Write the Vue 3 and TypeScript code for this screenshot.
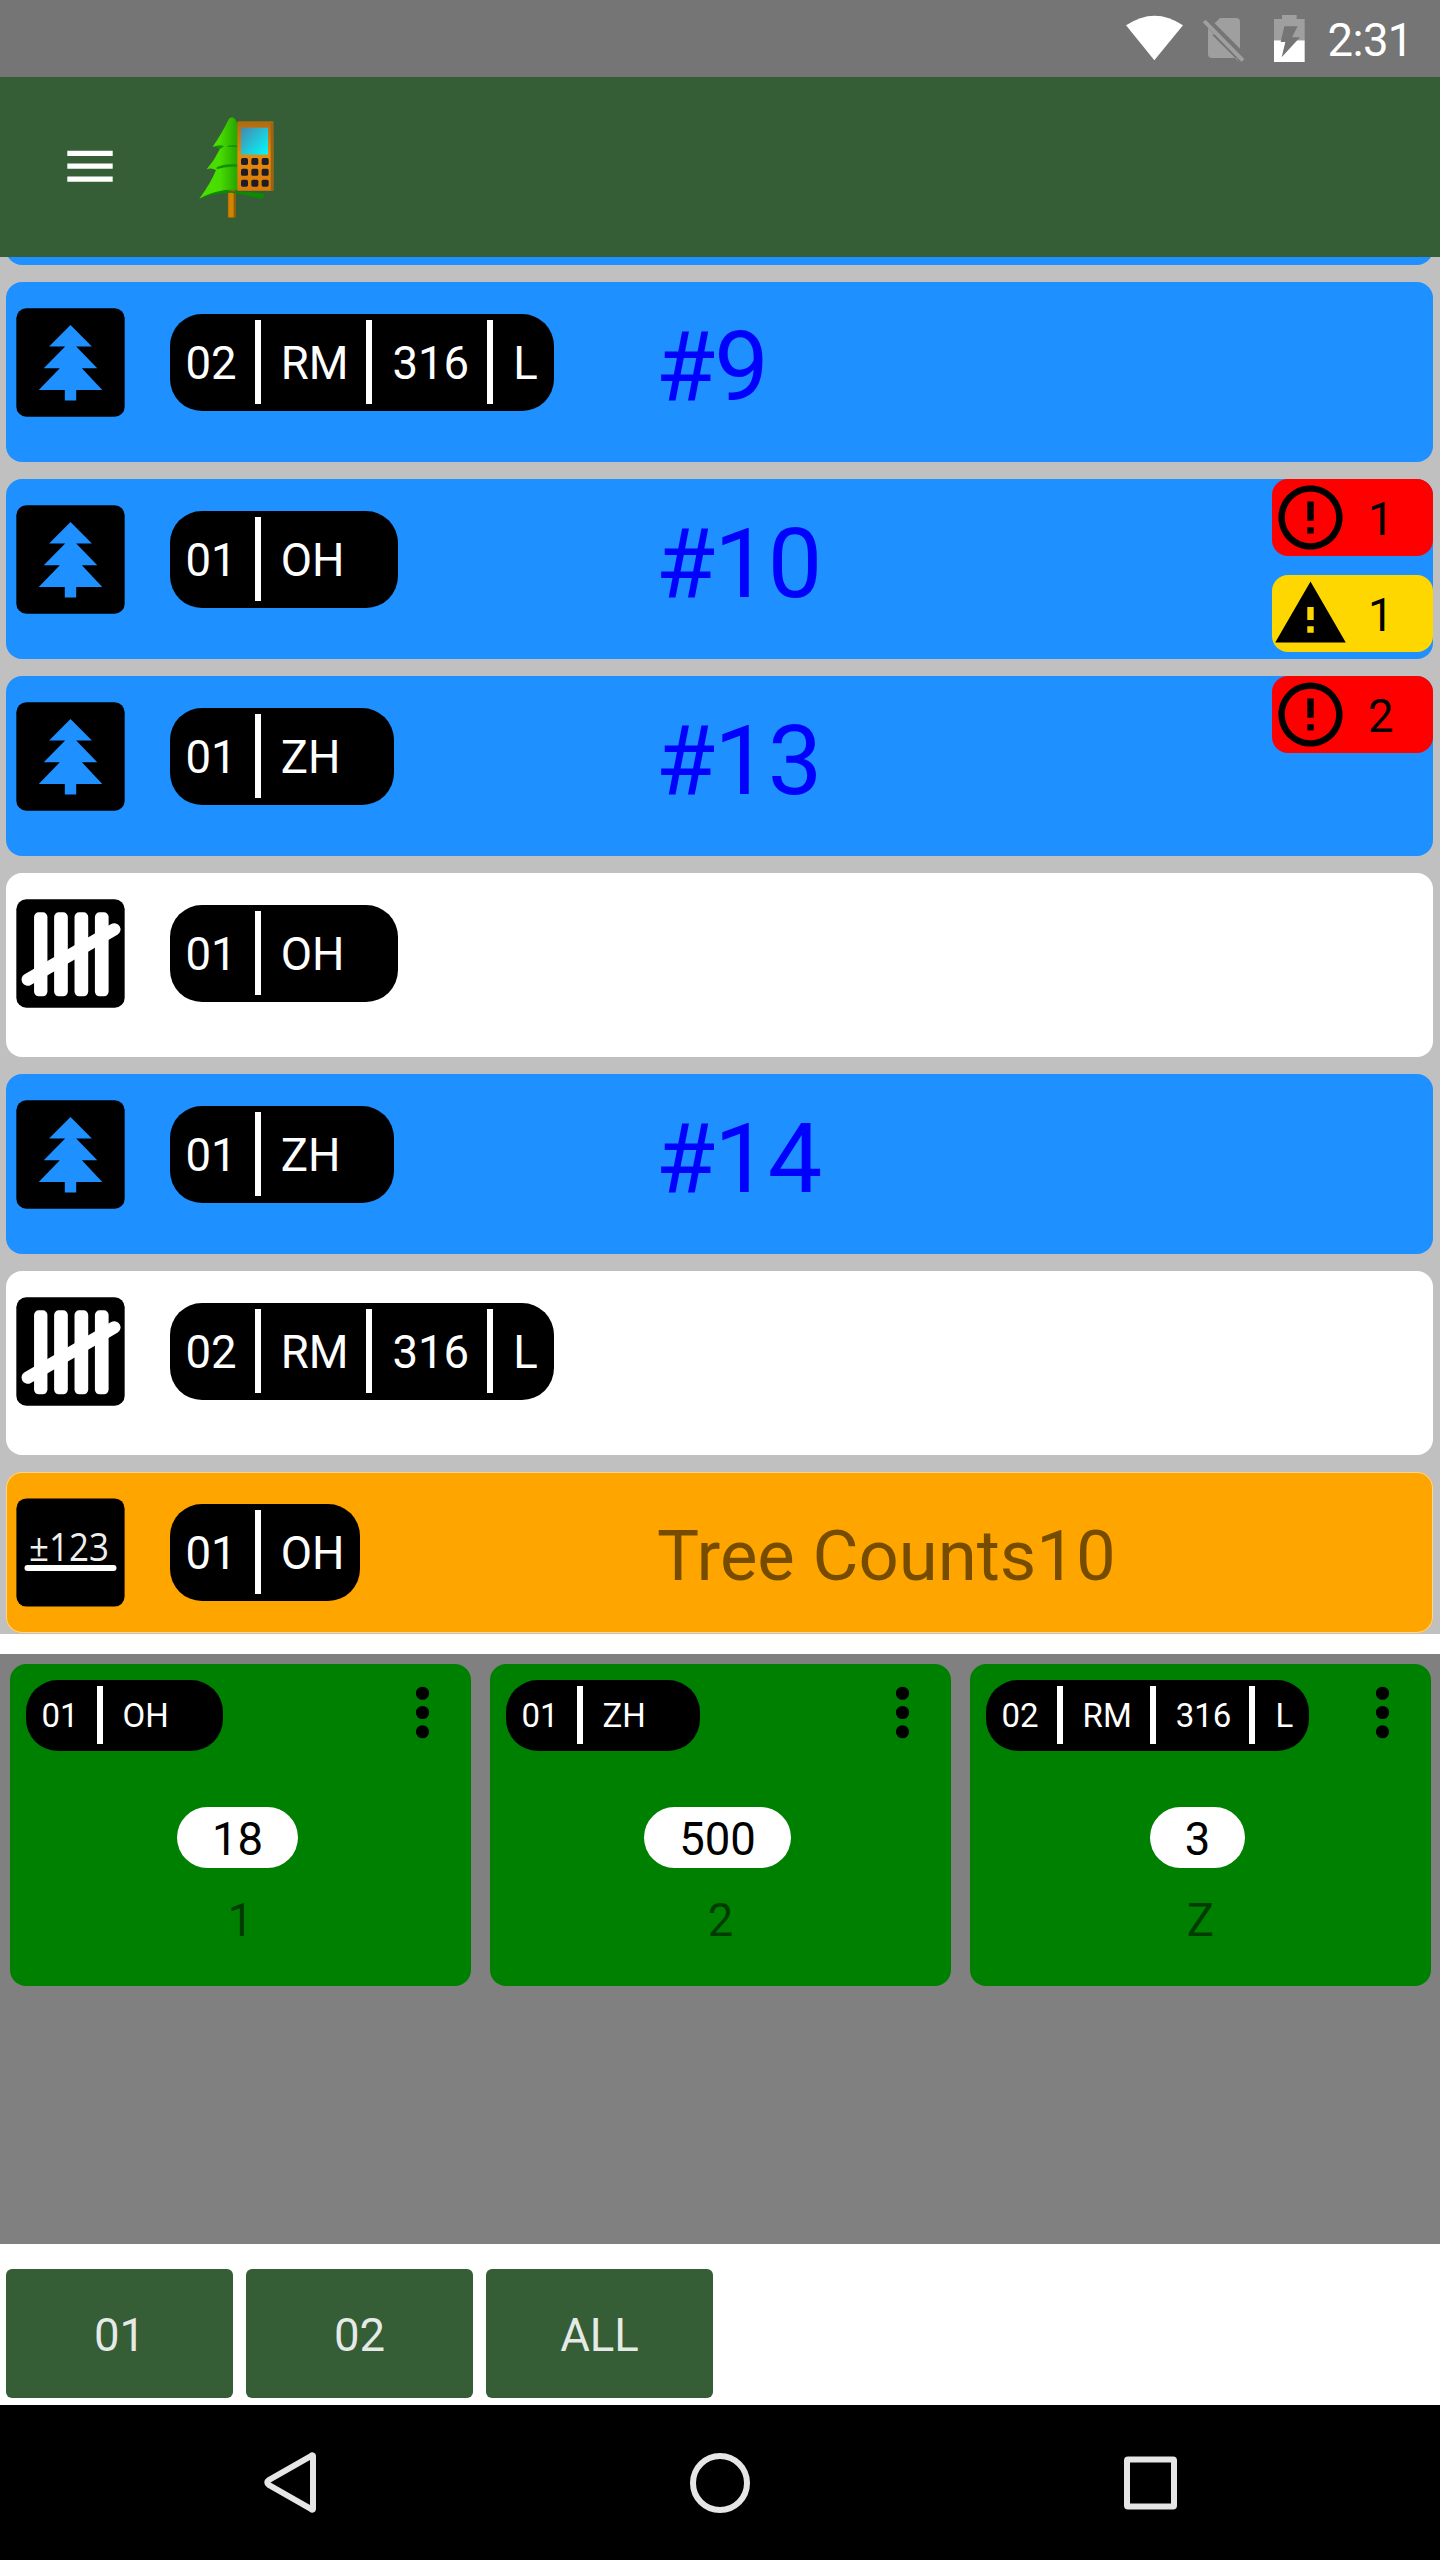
<script setup lang="ts">
type Kind = 'tree' | 'tally' | 'edit'

interface Badge {
  level: 'error' | 'warning'
  count: number
}

interface Entry {
  kind: Kind
  codes: string[]
  tail: boolean
  title: string
  badges: Badge[]
}

interface Tally {
  codes: string[]
  tail: boolean
  count: number
  hotkey: string
}

const entries: Entry[] = [
  { kind: 'tree', codes: ['02', 'RM', '316', 'L'], tail: false, title: '#9', badges: [] },
  {
    kind: 'tree',
    codes: ['01', 'OH'],
    tail: true,
    title: '#10',
    badges: [
      { level: 'error', count: 1 },
      { level: 'warning', count: 1 },
    ],
  },
  { kind: 'tree', codes: ['01', 'ZH'], tail: true, title: '#13', badges: [{ level: 'error', count: 2 }] },
  { kind: 'tally', codes: ['01', 'OH'], tail: true, title: '', badges: [] },
  { kind: 'tree', codes: ['01', 'ZH'], tail: true, title: '#14', badges: [] },
  { kind: 'tally', codes: ['02', 'RM', '316', 'L'], tail: false, title: '', badges: [] },
  { kind: 'edit', codes: ['01', 'OH'], tail: false, title: 'Tree Counts10', badges: [] },
]

const tallies: Tally[] = [
  { codes: ['01', 'OH'], tail: true, count: 18, hotkey: '1' },
  { codes: ['01', 'ZH'], tail: true, count: 500, hotkey: '2' },
  { codes: ['02', 'RM', '316', 'L'], tail: false, count: 3, hotkey: 'Z' },
]

const strata: string[] = ['01', '02', 'ALL']
const keyRows = [0, 1, 2]
</script>

<template>
  <div class="screen">
    <div class="status">
      <svg class="status-icons" viewBox="60 30 570 171">
        <path d="M78 76Q164 18 249 76L163 181Z" fill="#fff" />
        <path d="M324 92L417 185 410 174H336Q324 174 324 162ZM344 70L360 54H408Q420 54 420 66V146Z" fill="#9f9f9f" />
        <path d="M308 67L317 59 433 177 425 186Z" fill="#9f9f9f" />
        <path d="M324 104V84L344 104Z" fill="#9f9f9f" />
        <path d="M522 57H546V45H590V57H614V121H522Z" fill="#9f9f9f" />
        <path d="M522 121H614V186H522Z" fill="#fff" />
        <path d="M553 79H593L576 112H600L545 172 556 126H542Z" fill="#757575" />
      </svg>
      <span class="clock">2:31</span>
    </div>

    <header class="appbar">
      <svg class="menu" viewBox="0 0 46 32">
        <path d="M.3 .8H45.700V6H.3ZM.3 13.600H45.700V18.800H.3ZM.3 26.500H45.700V31.700H.3Z" fill="#fff" />
      </svg>
      <svg class="logo" viewBox="570 150 270 330">
        <defs>
          <linearGradient id="leaf" x1="0" y1="0" x2="1" y2="0">
            <stop offset="0" stop-color="#4be000" />
            <stop offset=".5" stop-color="#48dc00" />
            <stop offset="1" stop-color="#1f9a00" />
          </linearGradient>
          <linearGradient id="glass" x1="0" y1="0" x2="1" y2="1">
            <stop offset="0" stop-color="#4789ad" />
            <stop offset="1" stop-color="#00fbff" />
          </linearGradient>
          <linearGradient id="body" x1="0" y1="0" x2="0" y2="1">
            <stop offset="0" stop-color="#b06a10" />
            <stop offset=".5" stop-color="#e88a0c" />
            <stop offset="1" stop-color="#d97a08" />
          </linearGradient>
        </defs>
        <rect x="683" y="388" width="25" height="85" fill="#8a5c05" />
        <rect x="685" y="392" width="16" height="80" fill="#d08400" />
        <path d="M598 416Q650 382 700 394Q760 395 794 402Q792 416 780 416Q730 402 692 398Q640 400 598 416Z" fill="#0c8a04" />
        <path d="M686 178Q695 166 706 178L722 214V392Q690 386 660 393Q620 402 598 416Q632 370 648 330Q634 322 620 328Q644 300 660 266Q650 258 638 260Q664 224 686 178Z" fill="url(#leaf)" />
        <path d="M642 260Q656 252 672 258L662 266ZM650 322Q670 310 722 312V322Q680 317 650 328ZM682 258Q700 254 722 258V262Q700 260 682 260Z" fill="#159004" />
        <rect x="712" y="184" width="108" height="208" rx="3" fill="url(#body)" />
        <path d="M812 188H820V392H812Z" fill="#9a6414" />
        <rect x="723" y="203" width="81" height="81" fill="url(#glass)" />
        <g fill="#1d1d28">
          <template v-for="r in keyRows" :key="r">
            <rect v-for="c in keyRows" :key="c" :x="723 + c * 31" :y="294 + r * 32.5" width="21" height="21" rx="5" />
          </template>
        </g>
      </svg>
    </header>

    <main class="list">
      <div class="row-edge"></div>
      <article v-for="(e, i) in entries" :key="i" class="row" :class="e.kind">
        <svg v-if="e.kind === 'tree'" class="kind" viewBox="49 720 326 326">
          <rect x="50" y="721" width="324" height="324" rx="30" fill="#000" />
          <path d="M212 771L276 835H229L292 900H246L307 965H229V997H195V965H117L180 900H132L196 835H148Z" fill="#1e90ff" />
        </svg>
        <svg v-else-if="e.kind === 'tally'" class="kind" viewBox="49 117 326 326">
          <rect x="50" y="118" width="324" height="324" rx="30" fill="#000" />
          <g fill="#fff">
            <rect x="103" y="157" width="40" height="251" rx="14" />
            <rect x="163" y="157" width="41" height="251" rx="14" />
            <rect x="224" y="157" width="41" height="251" rx="14" />
            <rect x="285" y="157" width="41" height="251" rx="14" />
          </g>
          <path d="M84 358L343 208" stroke="#fff" stroke-width="37" stroke-linecap="round" />
        </svg>
        <svg v-else class="kind" viewBox="0 0 109 109">
          <rect x=".4" y=".4" width="108.200" height="108.200" rx="10" fill="#000" />
          <text x="13" y="63" textLength="80" lengthAdjust="spacingAndGlyphs" class="kind-text">±123</text>
          <rect x="8.500" y="67" width="92" height="6" rx="3" fill="#fff" />
        </svg>

        <div class="chip">
          <span v-for="c in e.codes" :key="c" class="code">{{ c }}</span>
          <span v-if="e.tail" class="tail"></span>
        </div>

        <div class="title">{{ e.title }}</div>

        <div class="badges">
          <div v-for="b in e.badges" :key="b.level" class="badge" :class="b.level">
            <svg viewBox="0 0 24 24">
              <path
                v-if="b.level === 'error'"
                d="M11 15h2v2h-2zm0-8h2v6h-2zm.99-5C6.470 2 2 6.480 2 12s4.470 10 9.990 10C17.520 22 22 17.520 22 12S17.520 2 11.990 2zM12 20c-4.420 0-8-3.580-8-8s3.580-8 8-8 8 3.580 8 8-3.580 8-8 8z"
              />
              <path v-else d="M1 21h22L12 2 1 21zm12-3h-2v-2h2v2zm0-4h-2v-4h2v4z" />
            </svg>
            <span>{{ b.count }}</span>
          </div>
        </div>
      </article>
    </main>

    <section class="tallies">
      <article v-for="t in tallies" :key="t.hotkey" class="card">
        <div class="card-head">
          <div class="chip small">
            <span v-for="c in t.codes" :key="c" class="code">{{ c }}</span>
            <span v-if="t.tail" class="tail"></span>
          </div>
          <svg class="more" viewBox="0 0 24 24">
            <circle cx="12" cy="6" r="2.050" />
            <circle cx="12" cy="12" r="2.050" />
            <circle cx="12" cy="18" r="2.050" />
          </svg>
        </div>
        <div class="count">{{ t.count }}</div>
        <div class="hotkey">{{ t.hotkey }}</div>
      </article>
    </section>

    <section class="strata">
      <button v-for="s in strata" :key="s" type="button">{{ s }}</button>
    </section>

    <nav class="navbar">
      <svg viewBox="0 0 70 70">
        <path d="M58 8.500V60.500Q58 62.500 56 61L14 37Q10.500 34.500 14 32L56 8Q58 6.500 58 8.500Z" />
      </svg>
      <svg viewBox="0 0 70 70"><circle cx="35" cy="35" r="27" /></svg>
      <svg viewBox="0 0 70 70"><rect x="12" y="11.500" width="47" height="47" rx="1" /></svg>
    </nav>
  </div>
</template>

<style>
body {
  margin: 0;
}
</style>

<style scoped>
.screen {
  width: 1440px;
  height: 2560px;
  overflow: hidden;
  display: flex;
  flex-direction: column;
  background: #fff;
  font-family: Roboto, sans-serif;
  font-size: 45.5px;
  color: #000;
}

svg {
  display: block;
  flex: none;
}

.status {
  height: 77px;
  flex: none;
  display: flex;
  background: #757575;
}

.status-icons {
  width: 190px;
  height: 57px;
  margin: 10px 0 0 1120px;
}

.clock {
  margin: 14px 0 0 17.5px;
  line-height: 54px;
  letter-spacing: -0.6px;
  color: #fff;
}

.appbar {
  height: 180px;
  flex: none;
  display: flex;
  background: #355e37;
}

.menu {
  width: 46px;
  height: 32px;
  margin: 73px 0 0 67px;
}

.logo {
  width: 90px;
  height: 110px;
  margin: 33px 0 0 77px;
}

.list {
  height: 1377px;
  flex: none;
  box-sizing: border-box;
  padding: 0 7px 0 6px;
  overflow: hidden;
  display: flex;
  flex-direction: column;
  gap: 17px;
  background: #c0c0c0;
}

.row-edge {
  height: 180px;
  margin-top: -172px;
  flex: none;
  border-radius: 16px;
  background: #1e90ff;
}

.row {
  height: 180px;
  flex: none;
  box-sizing: border-box;
  display: grid;
  grid-template-columns: 164px 487px 1fr 161px;
  align-items: start;
  border-radius: 16px;
  background: #1e90ff;
}

.row.tally {
  height: 184px;
  background: #fff;
}

.row.edit {
  height: 161px;
  background: #ffa500;
  box-shadow: inset 0 0 0 1px #ffd68c;
}

.kind {
  width: 109px;
  height: 109px;
  margin: 26px 0 0 10px;
}

.kind-text {
  font-family: "Open Sans", sans-serif;
  font-size: 38px;
  fill: #eee;
}

.chip {
  justify-self: start;
  height: 97px;
  margin-top: 32px;
  box-sizing: border-box;
  padding: 6px 16px 7px 15.5px;
  display: flex;
  border-radius: 32px;
  background: #000;
  color: #fff;
  line-height: 88px;
}

.code {
  height: 84px;
}

.code + .code {
  margin-left: 18px;
  padding-left: 20px;
  border-left: 6px solid #fff;
}

.tail {
  width: 38px;
}

.title {
  margin: 35px 0 0;
  padding-left: 0;
  font-size: 97px;
  line-height: 100px;
  letter-spacing: -1px;
  text-indent: -1.5px;
  color: #00f;
  white-space: nowrap;
}

.edit .title {
  margin-top: 42px;
  font-size: 70.7px;
  line-height: 84px;
  letter-spacing: 0;
  text-indent: 0;
  color: rgba(0, 0, 0, 0.54);
}

.badges {
  display: flex;
  flex-direction: column;
  gap: 19px;
}

.badge {
  height: 77px;
  display: flex;
  border-radius: 16px;
  line-height: 81px;
}

.badge.error {
  background: #f00;
}

.badge.warning {
  background: #ffd700;
}

.badge svg {
  width: 77px;
  height: 77px;
  margin-right: 19px;
}

.tallies {
  height: 590px;
  flex: none;
  margin-top: 20px;
  box-sizing: border-box;
  padding: 10px 9px 0 10px;
  display: flex;
  align-items: flex-start;
  gap: 19px;
  background: #808080;
}

.card {
  width: 461px;
  height: 322px;
  display: flex;
  flex-direction: column;
  align-items: center;
  border-radius: 16px;
  background: #008000;
}

.card-head {
  align-self: stretch;
  height: 87px;
  display: flex;
  justify-content: space-between;
}

.chip.small {
  height: 71px;
  margin: 16px 0 0 16px;
  font-size: 33px;
  line-height: 60px;
}

.small .code {
  height: 58px;
}

.more {
  width: 77px;
  height: 77px;
  margin: 10px 10px 0 0;
}

.count {
  margin: 56px 6px 0 0;
  padding: 0 35px;
  height: 61px;
  line-height: 66px;
  border-radius: 30.5px;
  background: #fff;
}

.hotkey {
  margin-top: 23px;
  line-height: 60px;
  color: rgba(0, 0, 0, 0.54);
}

.strata {
  height: 161px;
  flex: none;
  box-sizing: border-box;
  padding: 25px 6px 0;
  display: flex;
  gap: 13px;
}

.strata button {
  width: 227px;
  height: 129px;
  padding: 4px 0 0;
  border: 0;
  border-radius: 6px;
  background: #355e37;
  font: inherit;
  color: rgba(255, 255, 255, 0.88);
}

.navbar {
  height: 155px;
  flex: none;
  display: flex;
  justify-content: center;
  gap: 360px;
  align-items: center;
  background: #000;
}

.navbar svg {
  width: 70px;
  height: 70px;
  fill: none;
  stroke: #e6e6e6;
  stroke-width: 6px;
}
</style>
